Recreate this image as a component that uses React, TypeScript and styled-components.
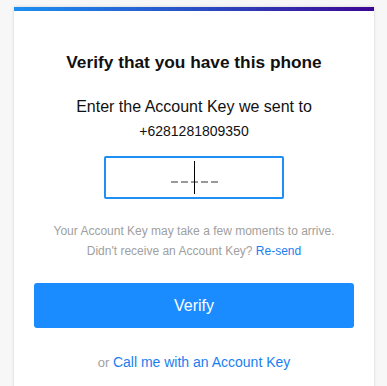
import React from 'react';
import styled, { createGlobalStyle } from 'styled-components';

const GlobalStyle = createGlobalStyle`
  html, body {
    margin: 0;
    padding: 0;
    background: #f7f7f7;
    font-family: "Liberation Sans", Arial, sans-serif;
  }
`;

const Page = styled.div`
  padding: 7px 13px 0 14px;
  height: 386px;
  box-sizing: border-box;
  overflow: hidden;
`;

const Card = styled.div`
  background: #fff;
  box-shadow: 0 0 3px rgba(0, 0, 0, 0.15);
  min-height: 400px;
`;

const Stripe = styled.div`
  height: 4px;
  background: linear-gradient(90deg, #1c8ff3 0%, #2a4fc4 50%, #3c0693 100%);
`;

const Body = styled.div`
  display: flex;
  flex-direction: column;
  align-items: center;
  padding: 0 20px;
`;

const Title = styled.h1`
  margin: 41px 0 0;
  font-size: 17.3px;
  font-weight: 700;
  color: #111;
`;

const Lead = styled.p`
  margin: 25px 0 0;
  font-size: 16px;
  color: #111;
`;

const Phone = styled.p`
  margin: 7px 0 0;
  font-size: 14px;
  color: #111;
`;

const CodeBox = styled.div`
  margin-top: 17px;
  width: 180px;
  height: 43px;
  box-sizing: border-box;
  border: 2px solid #1f8ff5;
  border-radius: 2px;
  display: flex;
  align-items: center;
  justify-content: center;
  position: relative;
`;

const Dashes = styled.div`
  display: flex;
  gap: 3px;
  margin-top: 8px;
`;

const Dash = styled.span`
  width: 7px;
  height: 2px;
  background: #999;
`;

const Caret = styled.span`
  position: absolute;
  left: 50%;
  top: 3px;
  width: 1px;
  height: 33px;
  background: #000;
`;

const Hint = styled.p`
  margin: 22px 0 0;
  font-size: 12px;
  line-height: 20px;
  color: #a0a0a0;
  text-align: center;
`;

const Link = styled.a<{ $size?: number }>`
  color: #1a7ef0;
  text-decoration: none;
  font-size: ${({ $size }) => ($size ? `${$size}px` : 'inherit')};
`;

const Button = styled.button`
  margin-top: 22px;
  width: 320px;
  height: 45px;
  border: none;
  border-radius: 3px;
  background: #1a8cff;
  color: #fff;
  font-family: inherit;
  font-size: 16px;
`;

const Alt = styled.p`
  margin: 26px 0 0;
  font-size: 13px;
  color: #a0a0a0;
`;

export default function App() {
  return (
    <>
      <GlobalStyle />
      <Page>
        <Card>
          <Stripe />
          <Body>
            <Title>Verify that you have this phone</Title>
            <Lead>Enter the Account Key we sent to</Lead>
            <Phone>+6281281809350</Phone>
            <CodeBox>
              <Dashes>
                {[0, 1, 2, 3, 4].map((i) => (
                  <Dash key={i} />
                ))}
              </Dashes>
              <Caret />
            </CodeBox>
            <Hint>
              Your Account Key may take a few moments to arrive.
              <br />
              Didn't receive an Account Key? <Link href="#">Re-send</Link>
            </Hint>
            <Button>Verify</Button>
            <Alt>
              or <Link href="#" $size={14}>Call me with an Account Key</Link>
            </Alt>
          </Body>
        </Card>
      </Page>
    </>
  );
}
